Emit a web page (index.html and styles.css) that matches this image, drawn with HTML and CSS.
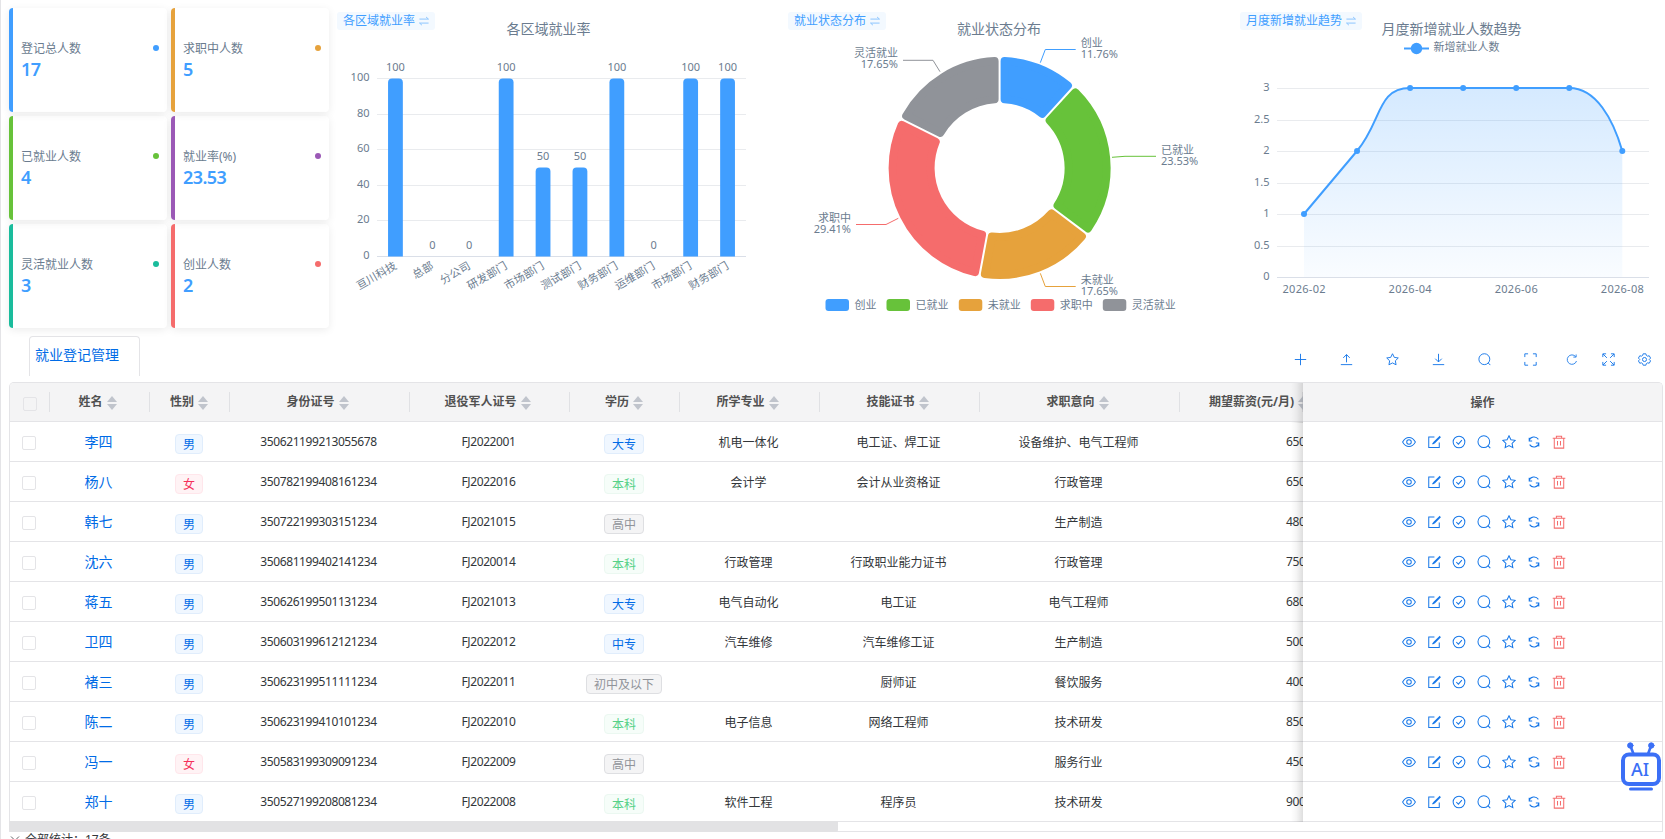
FILE: index.html
```html
<!DOCTYPE html>
<html lang="zh-CN">
<head>
    <meta charset="UTF-8">
    <title>就业登记管理</title>
    <link rel="stylesheet" href="styles.css">
</head>
<body>
    <svg class="sprite">
        <symbol id="i-plus" viewBox="0 0 16 16"><path d="M8 1v14M1 8h14"/></symbol>
        <symbol id="i-upload" viewBox="0 0 16 16"><path d="M8 11.500V2M4 6L8 1.900 12 6M1 14.300h14"/></symbol>
        <symbol id="i-download" viewBox="0 0 16 16"><path d="M8 1v10M4 7l4 4 4-4M1 14.300h14"/></symbol>
        <symbol id="i-star" viewBox="0 0 16 16"><path d="M8 .900l2.200 4.500 4.900.7-3.600 3.500.9 4.900L8 12.200l-4.400 2.300.9-4.900L.900 6.100l4.900-.7z"/></symbol>
        <symbol id="i-search" viewBox="0 0 16 16"><circle cx="7.800" cy="7.600" r="6.700"/><path d="M12.500 12.200l2.700 2.700"/></symbol>
        <symbol id="i-frame" viewBox="0 0 16 16"><path d="M1 5V1h4M11 1h4v4M15 11v4h-4M5 15H1v-4"/></symbol>
        <symbol id="i-reload" viewBox="0 0 16 16"><path d="M12.800 4.100A6.300 6.300 0 1 0 14 10M13.500 1.300v3.500H9.800"/></symbol>
        <symbol id="i-expand" viewBox="0 0 16 16"><path d="M1 5V1h4M11 1h4v4M15 11v4h-4M5 15H1v-4M1.300 1.300L6 6M14.700 1.300L10 6M14.700 14.700L10 10M1.300 14.700L6 10"/></symbol>
        <symbol id="i-gear" viewBox="0 0 16 16"><path d="M6.300 1h3.400l.6 2 1.500.9 2-.5 1.700 2.900L14 7.800v.4l1.500 1.500-1.700 2.900-2-.5-1.500.9-.6 2H6.300l-.6-2-1.500-.9-2 .5L.5 9.700 2 8.200v-.4L.5 6.300l1.700-2.900 2 .5L5.700 3z"/><circle cx="8" cy="8" r="2.500"/></symbol>
        <symbol id="i-eye" viewBox="0 0 16 16"><path d="M.7 8C2.600 4.500 5.100 2.800 8 2.800S13.400 4.500 15.300 8c-1.900 3.500-4.400 5.200-7.300 5.200S2.600 11.500.7 8z"/><circle cx="8" cy="8" r="2.600"/></symbol>
        <symbol id="i-edit" viewBox="0 0 16 16"><path d="M8.500 2.200H2v12h12V8.500M14.400 1.700L8 8.100l-1.700 2.300 2.500-1.500 6.300-6.400z"/></symbol>
        <symbol id="i-check" viewBox="0 0 16 16"><circle cx="8" cy="8" r="6.700"/><path d="M4.900 8l2.400 2.500 4-4.700"/></symbol>
        <symbol id="i-sync" viewBox="0 0 16 16"><path d="M2.300 6.800A5.900 5.900 0 0 1 13 5M2.500 3v3.900h3.400M13.700 9.200A5.900 5.900 0 0 1 3 11M13.500 13V9.100h-3.400"/></symbol>
        <symbol id="i-trash" viewBox="0 0 16 16"><path d="M.8 3.700h14.400M5 3.500V1.300h6v2.200M2.600 3.800V15h10.800V3.800M6.300 6.800v5.200M9.700 6.800v5.200"/></symbol>
        <symbol id="i-swap" viewBox="0 0 12 12"><path d="M.500 3.700h11M8.500 1.200l2.800 2.500M11.500 8.500H.500M3.500 11L.700 8.500"/></symbol>
    </svg>

    <div class="dashboard">
        <div class="cards">
            <div class="card blue"><div class="card-head"><span>登记总人数</span><i class="dot"></i></div><div class="card-value">17</div></div>
            <div class="card orange"><div class="card-head"><span>求职中人数</span><i class="dot"></i></div><div class="card-value">5</div></div>
            <div class="card green"><div class="card-head"><span>已就业人数</span><i class="dot"></i></div><div class="card-value">4</div></div>
            <div class="card purple"><div class="card-head"><span>就业率(%)</span><i class="dot"></i></div><div class="card-value">23.53</div></div>
            <div class="card teal"><div class="card-head"><span>灵活就业人数</span><i class="dot"></i></div><div class="card-value">3</div></div>
            <div class="card red"><div class="card-head"><span>创业人数</span><i class="dot"></i></div><div class="card-value">2</div></div>
        </div>
        <div class="panel">
            <div class="switch">各区域就业率<svg><use href="#i-swap"/></svg></div>
            <svg class="chart" id="barChart" viewBox="0 0 430 330"></svg>
        </div>
        <div class="panel">
            <div class="switch">就业状态分布<svg><use href="#i-swap"/></svg></div>
            <svg class="chart" id="pieChart" viewBox="0 0 430 330"></svg>
        </div>
        <div class="panel">
            <div class="switch trend-switch">月度新增就业趋势<svg><use href="#i-swap"/></svg></div>
            <svg class="chart" id="lineChart" viewBox="0 0 430 330"></svg>
        </div>
    </div>

    <div class="tabbar">
        <div class="tab">就业登记管理</div>
        <div class="toolbar">
            <svg class="icon"><use href="#i-plus"/></svg>
            <svg class="icon"><use href="#i-upload"/></svg>
            <svg class="icon"><use href="#i-star"/></svg>
            <svg class="icon"><use href="#i-download"/></svg>
            <svg class="icon"><use href="#i-search"/></svg>
            <svg class="icon"><use href="#i-frame"/></svg>
            <svg class="icon small"><use href="#i-reload"/></svg>
            <svg class="icon tight"><use href="#i-expand"/></svg>
            <svg class="icon tight"><use href="#i-gear"/></svg>
        </div>
    </div>

    <div class="table" id="table">
        <div class="row header">
            <div class="cell"><span class="checkbox"></span></div>
            <div class="cell">姓名<i class="sort"></i></div>
            <div class="cell">性别<i class="sort"></i></div>
            <div class="cell">身份证号<i class="sort"></i></div>
            <div class="cell">退役军人证号<i class="sort"></i></div>
            <div class="cell">学历<i class="sort"></i></div>
            <div class="cell">所学专业<i class="sort"></i></div>
            <div class="cell">技能证书<i class="sort"></i></div>
            <div class="cell">求职意向<i class="sort"></i></div>
            <div class="cell salary">期望薪资(元/月)<i class="sort"></i></div>
            <div class="cell actions">操作</div>
        </div>
    </div>
    <div class="scrollbar"><div class="thumb"></div></div>
    <div class="summary">
        <svg class="chevron" viewBox="0 0 10 10"><path d="M1 2.500l4 4 4-4"/></svg>
        <span>全部统计：17条</span>
    </div>

    <svg class="robot" viewBox="0 0 42 50">
        <path d="M10.500 5l3 8M31 5l-3 8" stroke-width="2.600"/>
        <circle cx="10.300" cy="4.500" r="2.700"/>
        <circle cx="31.300" cy="4.500" r="2.700"/>
        <rect class="face" x="3" y="13.500" width="36" height="29.500" rx="6" stroke-width="4"/>
        <path d="M10.500 48h21" stroke-width="3"/>
        <text x="11" y="34.500">AI</text>
    </svg>

    <script src="script.js"></script>
</body>
</html>
```

FILE: styles.css
```css
* {
    box-sizing: border-box;
}
body {
    margin: 0;
    height: 839px;
    overflow: hidden;
    border-left: 1px solid #e4e4e7;
    background: #fff;
    color: #323639;
    font-family: "Noto Sans", "Noto Sans CJK SC", sans-serif;
    font-size: 12px;
}
.sprite {
    display: none;
}
.icon {
    width: 14px;
    height: 14px;
    fill: none;
    stroke: #1677e8;
    stroke-width: 1.15;
}

/* dashboard */
.dashboard {
    display: flex;
    height: 336px;
    padding: 8px 0 0 8px;
}
.cards {
    display: grid;
    grid-template-columns: 158px 158px;
    grid-auto-rows: 104px;
    gap: 4px;
    margin-right: 4px;
}
.card {
    --c: #409eff;
    display: flex;
    flex-direction: column;
    justify-content: center;
    padding: 0 8px;
    border-left: 4px solid var(--c);
    border-radius: 4px;
    box-shadow: 0 2px 8px rgba(0, 0, 0, 0.08);
}
.card.orange { --c: #e6a23c; }
.card.green { --c: #67c23a; }
.card.purple { --c: #9b59b6; }
.card.teal { --c: #1abc9c; }
.card.red { --c: #f56c6c; }
.card-head {
    display: flex;
    justify-content: space-between;
    align-items: center;
    height: 18px;
    margin: 1px 0;
    color: #6b7c8f;
}
.dot {
    width: 6px;
    height: 6px;
    border-radius: 50%;
    background: var(--c);
}
.card-value {
    height: 24px;
    line-height: 23px;
    font-size: 18px;
    font-weight: 600;
    letter-spacing: -0.6px;
    color: #409eff;
}
.panel {
    position: relative;
    flex: none;
    width: 451px;
    margin-top: -8px;
}
.chart {
    display: block;
    width: 430px;
    height: 330px;
}
.switch {
    position: absolute;
    left: 4px;
    top: 12px;
    display: flex;
    align-items: center;
    gap: 4px;
    height: 18px;
    padding: 0 6px;
    border-radius: 3px;
    background: #f3f9ff;
    line-height: 17px;
    padding-bottom: 1px;
    color: #409eff;
}
.trend-switch {
    left: 5px;
}
.switch svg {
    width: 10px;
    height: 10px;
    fill: none;
    stroke: #8cc5ff;
    stroke-width: 1.2;
}

/* charts */
.chart text {
    font-size: 11px;
    fill: #6b7c8f;
}
.chart .title {
    font-size: 14px;
    text-anchor: middle;
}
.chart .mid {
    text-anchor: middle;
}
.chart .end {
    text-anchor: end;
}
.chart .grid {
    stroke: #e9ebee;
}
.chart .axis {
    stroke: #dadfe8;
}
.chart .guide {
    fill: none;
}
.chart .trend {
    fill: none;
    stroke: #409eff;
    stroke-width: 2;
}

/* tab bar */
.tabbar {
    display: flex;
    justify-content: space-between;
    height: 46px;
    padding-left: 28px;
}
.tab {
    width: 111px;
    height: 40px;
    padding-left: 5px;
    border: 1px solid #e4e4e7;
    border-bottom: none;
    border-radius: 4px 4px 0 0;
    line-height: 35px;
    font-size: 14px;
    color: #006be6;
}
.toolbar {
    display: flex;
    align-items: center;
    padding-right: 14px;
}
.toolbar .icon {
    width: 13px;
    height: 13px;
    margin-left: 33px;
}
.toolbar .icon.small {
    width: 12px;
    margin-left: 29px;
}
.toolbar .icon.tight {
    margin-left: 23.500px;
}

/* table */
.table {
    width: 1654px;
    margin-left: 8px;
    border: 1px solid #e4e4e7;
    border-bottom: none;
    border-radius: 5px 5px 0 0;
    overflow: hidden;
}
.row {
    display: grid;
    grid-template-columns: 40px 100px 80px 180px 160px 110px 140px 160px 200px 123px 1fr;
    height: 40px;
    border-bottom: 1px solid #e4e4e7;
}
.cell {
    display: flex;
    align-items: center;
    justify-content: center;
    min-width: 0;
    padding: 0 3px 0 0;
    white-space: nowrap;
    overflow: hidden;
}
.num {
    letter-spacing: -0.4px;
}
.header {
    height: 39px;
    background: #f4f4f5;
    color: #515151;
    font-weight: bold;
}
.header .cell {
    height: 38px;
    padding: 0 5px 2px 0;
    background: linear-gradient(#e0e1e4, #e0e1e4) right 9px / 1px 20px no-repeat;
}
.header .cell:first-child {
    padding: 0 2px 0 0;
}
.sort {
    display: flex;
    flex-direction: column;
    gap: 2px;
    margin: 4px 0 0 4px;
}
.sort::before,
.sort::after {
    content: "";
    border: 5px solid transparent;
    border-top-width: 0;
    border-bottom: 6px solid #c0c4cc;
}
.sort::after {
    border-bottom-width: 0;
    border-top: 6px solid #c0c4cc;
}
.checkbox {
    width: 14px;
    height: 14px;
    margin: 3px 0 0 1px;
    border: 1px solid #e4e4e7;
    border-radius: 2px;
}
.name {
    padding-bottom: 1px;
    font-size: 14px;
    color: #006be6;
}
.tag {
    height: 20px;
    margin-top: 5px;
    padding: 0 7px;
    border: 1px solid #e0edfc;
    border-radius: 4px;
    background: #f0f7ff;
    line-height: 19px;
    color: #006be6;
}
.tag.female {
    border-color: #ffe6eb;
    background: #fff3f5;
    color: #f5315a;
}
.tag.bachelor {
    border-color: #ebf8f1;
    background: #f6fdf9;
    color: #57d188;
}
.tag.middle {
    border-color: #dedfe2;
    background: #f4f4f5;
    color: #909399;
}
.cell:nth-child(3),
.cell:nth-child(6) {
    padding-right: 2px;
}
.row .salary {
    justify-content: flex-start;
    padding: 0 0 0 106px;
}
.header .salary {
    padding: 0 0 2px 29px;
}
.row .actions {
    position: relative;
    gap: 11px;
    padding: 1px 0 0 2px;
    overflow: visible;
    background: #fff;
}
.header .actions {
    padding: 0;
    background: #f4f4f5;
}
.actions::before {
    content: "";
    position: absolute;
    left: -12px;
    top: 0;
    width: 12px;
    height: 40px;
    background: linear-gradient(to left, rgba(0, 0, 0, 0.13), rgba(0, 0, 0, 0.04) 55%, transparent);
}
.actions .danger {
    stroke: #f56c6c;
}
.scrollbar {
    width: 1654px;
    height: 11px;
    margin: -1px 0 0 8px;
    border: 1px solid #e4e4e7;
}
.thumb {
    width: 829px;
    height: 11px;
    margin: -1px;
    border-radius: 0 0 2px 2px;
    background: #e2e2e4;
}
.summary {
    display: flex;
    gap: 5px;
    padding-left: 9px;
    line-height: 16px;
}
.chevron {
    width: 10px;
    height: 10px;
    margin-top: 2px;
    fill: none;
    stroke: #606266;
}

/* assistant entry floating over the table */
.robot {
    position: absolute;
    right: 3px;
    top: 741px;
    width: 42px;
    height: 50px;
    fill: #3b6ff6;
    stroke: #3b6ff6;
    stroke-linecap: round;
}
.robot .face {
    fill: #fff;
}
.robot text {
    stroke: none;
    font-size: 18px;
    font-weight: 500;
}
```

FILE: script.js
```js
// Bar chart
const regions = [['亘川科技', 100], ['总部', 0], ['分公司', 0], ['研发部门', 100], ['市场部门', 50],
    ['测试部门', 50], ['财务部门', 100], ['运维部门', 0], ['市场部门', 100], ['财务部门', 100]];
let bar = '<text class="title" x="215.500" y="34">各区域就业率</text>';
for (let v = 0; v <= 100; v += 20) {
    const y = Math.round(256 - v * 1.78) + 0.5;
    bar += `<line class="${v ? 'grid' : 'axis'}" x1="44" x2="413" y1="${y}" y2="${y}"/>`;
    bar += `<text class="end" x="36.500" y="${y + 2.500}">${v}</text>`;
}
regions.forEach(([name, value], i) => {
    const x = 44 + 36.9 * (i + 0.5);
    const top = 256.5 - value * 1.78;
    if (value) {
        bar += `<path fill="#409eff" d="M${x - 7.4} 256.500V${top + 4}q0-4 4-4h6.800q4 0 4 4V256.500z"/>`;
    }
    bar += `<text class="mid" x="${x}" y="${top - 7.5}">${value}</text>`;
    bar += `<text class="end" transform="translate(${x + 2} 268) rotate(-30)">${name}</text>`;
});
document.getElementById('barChart').innerHTML = bar;

// Donut chart
const states = [
    { name: '创业', n: 2, pct: '11.76%', color: '#409eff', line: '256.300,62.700 261.300,49.500 291.700,49.500', x: 296.7, y: 47, legend: 41 },
    { name: '已就业', n: 4, pct: '23.53%', color: '#67c23a', line: '328,157.300 341,156.300 372,156.300', x: 377, y: 154, legend: 102 },
    { name: '未就业', n: 3, pct: '17.65%', color: '#e6a23c', line: '256.300,273.300 261.300,286.500 291.700,286.500', x: 296.7, y: 284, legend: 174.3 },
    { name: '求职中', n: 5, pct: '29.41%', color: '#f56c6c', line: '114.300,218.300 102,224.500 72,224.500', x: 67, y: 222, legend: 246.3, end: true },
    { name: '灵活就业', n: 3, pct: '17.65%', color: '#909399', line: '156,71.700 149,60.300 119,60.300', x: 114, y: 57, legend: 318.3, end: true }
];
const cx = 215.6, cy = 168, corner = 4;
const outer = 111 - corner, inner = 65 + corner, inset = corner + 1;
const point = (r, a) => `${(cx + r * Math.sin(a)).toFixed(2)} ${(cy - r * Math.cos(a)).toFixed(2)}`;
let pie = '<text class="title" x="215" y="34">就业状态分布</text>';
let angle = 0;
states.forEach(s => {
    const next = angle + s.n / 17 * Math.PI * 2;
    const o = Math.asin(inset / outer), n = Math.asin(inset / inner);
    pie += `<path fill="${s.color}" stroke="${s.color}" stroke-width="${corner * 2}" stroke-linejoin="round"
        d="M${point(outer, angle + o)}A${outer} ${outer} 0 0 1 ${point(outer, next - o)}L${point(inner, next - n)}A${inner} ${inner} 0 0 0 ${point(inner, angle + n)}z"/>`;
    pie += `<polyline class="guide" stroke="${s.color}" points="${s.line}"/>`;
    pie += `<text class="${s.end ? 'end' : ''}" x="${s.x}" y="${s.y}">${s.name}</text>`;
    pie += `<text class="${s.end ? 'end' : ''}" x="${s.x}" y="${s.y + 11}">${s.pct}</text>`;
    pie += `<rect x="${s.legend + 0.5}" y="299" width="23.500" height="12" rx="3" fill="${s.color}"/>`;
    pie += `<text x="${s.legend + 29.5}" y="308.500">${s.name}</text>`;
    angle = next;
});
document.getElementById('pieChart').innerHTML = pie;

// Line chart
const months = [['2026-02', 1], ['2026-03', 2], ['2026-04', 3], ['2026-05', 3], ['2026-06', 3], ['2026-07', 3], ['2026-08', 2]];
const curve = 'M69 214L122 151C147 121 142 88 175 88H334.300C361 88 378 119 387.300 151';
let line = `<defs><linearGradient id="area" x1="0" x2="0" y1="0" y2="1">
    <stop offset="0" stop-color="#409eff" stop-opacity=".22"/><stop offset="1" stop-color="#409eff" stop-opacity=".03"/></linearGradient></defs>
    <text class="title" x="216.500" y="34">月度新增就业人数趋势</text>
    <path class="trend" d="M169 48.500h25"/><circle cx="181.500" cy="48.500" r="5.700" fill="#409eff"/>
    <text x="198.500" y="51">新增就业人数</text>`;
for (let v = 0; v <= 3; v += 0.5) {
    const y = Math.round(277 - v * 63) + 0.5;
    line += `<line class="${v ? 'grid' : 'axis'}" x1="42" x2="414" y1="${y}" y2="${y}"/>`;
    line += `<text class="end" x="34.500" y="${y + 2.500}">${v}</text>`;
}
line += `<path fill="url(#area)" d="${curve}V277H69z"/><path class="trend" d="${curve}"/>`;
months.forEach(([label, v], i) => {
    const x = 69 + 53.05 * i;
    line += `<circle cx="${x}" cy="${277 - v * 63}" r="3" fill="#409eff"/>`;
    if (i % 2 === 0) {
        line += `<text class="mid" x="${x}" y="293" textLength="43">${label}</text>`;
    }
});
document.getElementById('lineChart').innerHTML = line;

// Table rows
const rows = [
    ['李四', '男', '350621199213055678', 'FJ2022001', '大专', '机电一体化', '电工证、焊工证', '设备维护、电气工程师', '6500'],
    ['杨八', '女', '350782199408161234', 'FJ2022016', '本科', '会计学', '会计从业资格证', '行政管理', '6500'],
    ['韩七', '男', '350722199303151234', 'FJ2021015', '高中', '', '', '生产制造', '4800'],
    ['沈六', '男', '350681199402141234', 'FJ2020014', '本科', '行政管理', '行政职业能力证书', '行政管理', '7500'],
    ['蒋五', '男', '350626199501131234', 'FJ2021013', '大专', '电气自动化', '电工证', '电气工程师', '6800'],
    ['卫四', '男', '350603199612121234', 'FJ2022012', '中专', '汽车维修', '汽车维修工证', '生产制造', '5000'],
    ['褚三', '男', '350623199511111234', 'FJ2022011', '初中及以下', '', '厨师证', '餐饮服务', '4000'],
    ['陈二', '男', '350623199410101234', 'FJ2022010', '本科', '电子信息', '网络工程师', '技术研发', '8500'],
    ['冯一', '女', '350583199309091234', 'FJ2022009', '高中', '', '', '服务行业', '4500'],
    ['郑十', '男', '350527199208081234', 'FJ2022008', '本科', '软件工程', '程序员', '技术研发', '9000']
];
const tagClass = { '女': 'female', '本科': 'bachelor', '高中': 'middle', '初中及以下': 'middle' };
const tag = text => `<span class="tag ${tagClass[text] || ''}">${text}</span>`;
const actions = ['eye', 'edit', 'check', 'search', 'star', 'sync', 'trash']
    .map(n => `<svg class="icon ${n === 'trash' ? 'danger' : ''}"><use href="#i-${n}"/></svg>`).join('');

document.getElementById('table').insertAdjacentHTML('beforeend', rows.map(r => `
    <div class="row">
        <div class="cell"><span class="checkbox"></span></div>
        <div class="cell name">${r[0]}</div>
        <div class="cell">${tag(r[1])}</div>
        <div class="cell num">${r[2]}</div>
        <div class="cell num">${r[3]}</div>
        <div class="cell">${tag(r[4])}</div>
        <div class="cell">${r[5]}</div>
        <div class="cell">${r[6]}</div>
        <div class="cell">${r[7]}</div>
        <div class="cell num salary">${r[8]}</div>
        <div class="cell actions">${actions}</div>
    </div>`).join(''));
```
